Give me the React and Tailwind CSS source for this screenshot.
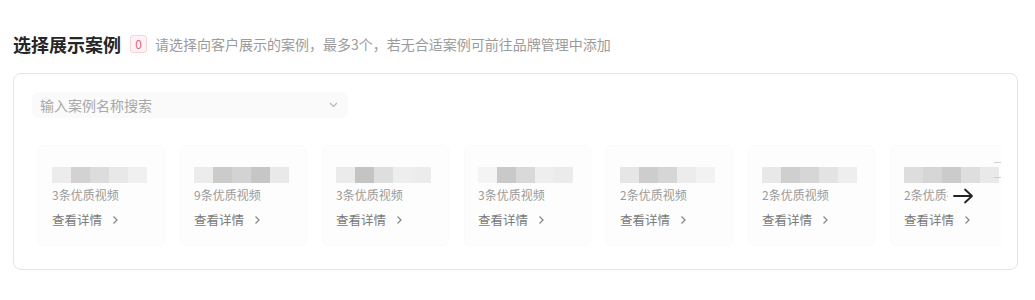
import React from "react";

const cases = [
  { count: 3, blocks: ["#ececec", "#d2d2d2", "#dcdcdc", "#e8e8e8", "#f0f0f0"] },
  { count: 9, blocks: ["#ececec", "#cbcbcb", "#d3d3d3", "#c6c6c6", "#e9e9e9"] },
  { count: 3, blocks: ["#ebebeb", "#c4c4c4", "#dedede", "#eeeeee", "#ececec"] },
  { count: 3, blocks: ["#f4f4f4", "#c9c9c9", "#d9d9d9", "#eeeeee", "#ebebeb"] },
  { count: 2, blocks: ["#e6e6e6", "#cdcdcd", "#d6d6d6", "#ececec", "#f2f2f2"] },
  { count: 2, blocks: ["#e8e8e8", "#cfcfcf", "#d6d6d6", "#e3e3e3", "#eeeeee"] },
  { count: 2, blocks: ["#dddddd", "#d6d6d6", "#cbcbcb", "#dedede", "#e9e9e9"] },
];

function CaseCard({ item, last }) {
  return (
    <div className="relative w-[127px] h-[101px] shrink-0 rounded-md border border-[#fafafa] bg-[#fdfdfd] pl-[13px] pt-[21px]">
      <div className="flex h-[16px] w-[95px]">
        {item.blocks.map((c, i) => (
          <div key={i} className="h-full flex-1" style={{ backgroundColor: c }} />
        ))}
      </div>
      <div className="mt-[4px] text-[12px] leading-[16px] text-[#9a9a9a]">{item.count}条优质视频</div>
      <div className="mt-[8px] flex items-center gap-[8px] text-[12.5px] leading-[18px] text-[#7a7a7a]">
        查看详情
        <svg width="10" height="10" viewBox="0 0 10 10" fill="none" stroke="#8a8a8a" strokeWidth="1.3">
          <path d="M3.5 1.5 L7 5 L3.5 8.5" />
        </svg>
      </div>
      {last && (
        <div className="absolute left-[57px] top-[40px] flex h-[20px] w-[30px] items-center justify-center bg-[#fdfdfd]">
          <svg width="21" height="16" viewBox="0 0 21 16" fill="none" stroke="#222" strokeWidth="1.8" strokeLinecap="round" strokeLinejoin="round">
            <path d="M1 8 H19 M12 1.5 L19 8 L12 14.5" />
          </svg>
        </div>
      )}
    </div>
  );
}

export default function App() {
  return (
    <div className="min-h-[300px] bg-white px-[13px] pt-[33px] font-['Noto_Sans_CJK_SC','Noto_Sans',sans-serif]">
      {/* Header */}
      <div className="flex items-center h-[22px]">
        <h2 className="text-[18px] font-bold leading-[22px] text-[#262626]">选择展示案例</h2>
        <span className="ml-[9px] flex h-[18px] w-[17px] items-center justify-center rounded-[3px] border border-[#f6d3dc] bg-[#fff3f6] text-[12px] text-[#e0607a]">
          0
        </span>
        <span className="ml-[8px] text-[14px] text-[#9b9b9b]">
          请选择向客户展示的案例，最多3个，若无合适案例可前往品牌管理中添加
        </span>
      </div>

      {/* Panel */}
      <div className="mt-[18px] w-[1005px] h-[197px] rounded-lg border border-[#e4e4e4] pt-[18px] pl-[18px] pr-[17px] overflow-hidden">
        <div className="flex h-[26px] w-[316px] items-center justify-between rounded-md bg-[#fafafa] pl-[8px] pr-[10px]">
          <span className="text-[14px] text-[#a8a8a8]">输入案例名称搜索</span>
          <svg width="9" height="6" viewBox="0 0 9 6" fill="none" stroke="#b5b5b5" strokeWidth="1.2">
            <path d="M1 1 L4.5 4.5 L8 1" />
          </svg>
        </div>

        <div className="relative mt-[27px] ml-[6px] w-[963px] overflow-hidden">
          <div className="flex gap-[15px]">
            {cases.map((c, i) => (
              <CaseCard key={i} item={c} last={i === cases.length - 1} />
            ))}
          </div>
          <div className="absolute right-0 top-[17px] h-px w-[7px] bg-[#cfcfcf]" />
          <div className="absolute right-0 top-[32px] h-px w-[7px] bg-[#cfcfcf]" />
        </div>
      </div>
    </div>
  );
}
